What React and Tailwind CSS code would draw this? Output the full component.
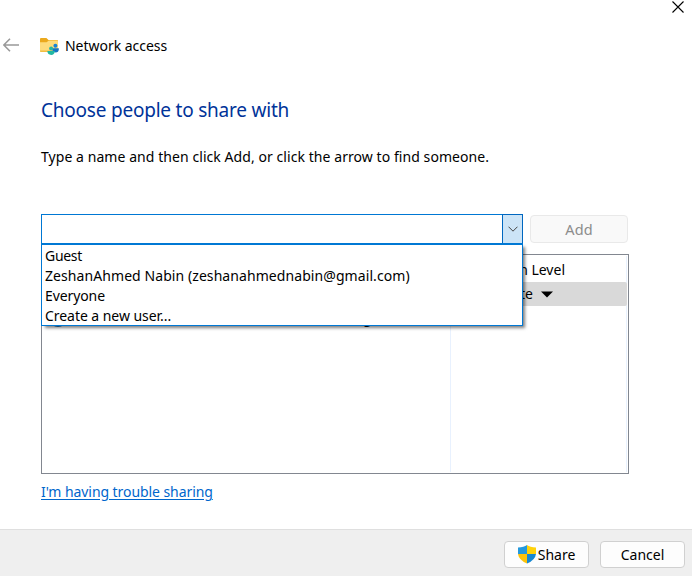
import React from "react";

const people = [
  { name: "Guest", cls: "tracking-[-0.3px]" },
  { name: "ZeshanAhmed Nabin (zeshanahmednabin@gmail.com)", cls: "tracking-[0.075px]" },
  { name: "Everyone", cls: "tracking-[-0.1px]" },
  { name: "Create a new user...", cls: "tracking-[-0.05px]" },
];

function FolderIcon() {
  return (
    <svg width="20" height="18" viewBox="0 0 20 18" className="block shrink-0">
      <path d="M0 2Q0 1 1 1H6.4L8.5 3H17Q18 3 18 4V7H0Z" fill="#eba91d" />
      <path d="M0 5.2H6.6L8.8 3.4H17Q18 3.4 18 4.4V14Q18 15 17 15H1Q0 15 0 14Z" fill="#fedc7c" />
      <path d="M0 13.4H18V14Q18 15 17 15H1Q0 15 0 14Z" fill="#f2bd42" />
      <circle cx="15.4" cy="8.7" r="2" fill="#1683d8" />
      <path d="M12.2 11.2H18.8V12.4Q18.6 15.4 15.6 15.4Q12.4 15.2 12.2 12Z" fill="#1574c4" />
      <circle cx="11.1" cy="11.5" r="2" fill="#27b5a5" />
      <path d="M7.4 14H14.8V14.8Q14.4 17.9 11.2 17.9Q7.6 17.7 7.4 14.6Z" fill="#22b8a4" />
    </svg>
  );
}

function ShieldIcon() {
  return (
    <svg width="18" height="19" viewBox="0 0 18 19" className="block shrink-0">
      <path d="M9 0Q6 2.2 0 2.4V9H9Z" fill="#2499dc" />
      <path d="M9 0Q12 2.2 18 2.4V9H9Z" fill="#ffd20a" />
      <path d="M0 9H9V18.5Q0.8 15.2 0 9Z" fill="#fbc30b" />
      <path d="M18 9H9V18.5Q17.2 15.2 18 9Z" fill="#1788d2" />
    </svg>
  );
}

export default function App() {
  return (
    <div className="flex h-[576px] w-[692px] flex-col overflow-hidden bg-white font-['Noto_Sans','Open_Sans',sans-serif] text-[14px] leading-5 text-black">
      <div className="flex h-[34px] justify-end pt-px pr-2">
        <svg width="12" height="12" viewBox="0 0 12 12" className="block">
          <path d="M0.5 0.5L11.5 11.5M11.5 0.5L0.5 11.5" stroke="#000" strokeWidth="1.1" />
        </svg>
      </div>
      <header className="flex h-6 items-center pl-[3px]">
        <svg width="16" height="14" viewBox="0 0 16 14" className="mt-[-2px] block">
          <path d="M16 7H1M7 0.8L0.8 7L7 13.2" fill="none" stroke="#999" strokeWidth="1.6" />
        </svg>
        <span className="ml-[21px]"><FolderIcon /></span>
        <span className="ml-[5px] tracking-[-0.03px]">Network access</span>
      </header>
      <main className="flex h-[471px] flex-col pl-[41px]">
        <h1 className="mt-[38px] text-[19px] leading-7 tracking-[-0.22px] text-[#003399]">Choose people to share with</h1>
        <p className="mt-[23px] whitespace-nowrap tracking-[0.065px]">Type a name and then click Add, or click the arrow to find someone.</p>
        <div className="mt-[47px] flex h-[31px] w-[588px]">
          <div className="relative flex h-[30px] w-[482px] border border-[#0078d4]">
            <div className="flex-1" />
            <button className="-my-px -mr-px flex w-[21px] items-center justify-center border border-[#0067c0] bg-[#cce4f7]">
              <svg width="10" height="6" viewBox="0 0 10 6" className="block">
                <path d="M0.5 0.7L5 5.2L9.5 0.7" fill="none" stroke="#444" strokeWidth="1" />
              </svg>
            </button>
            <ul className="absolute -left-px top-[28px] z-10 h-[83px] w-[482px] border border-t-2 border-[#0078d4] bg-white pt-px pl-[3px] shadow-[3px_3px_3px_-1px_rgba(0,0,0,0.5)]">
              {people.map((p) => (
                <li key={p.name} className={"h-5 whitespace-nowrap leading-5 " + p.cls}>{p.name}</li>
              ))}
            </ul>
          </div>
          <button className="mt-px ml-[7px] h-7 w-[98px] rounded-[4px] border border-[#e9e9e9] bg-[#f9f9f9] pb-px text-[14.5px] tracking-[0.1px] text-[#8c8c8c]">Add</button>
        </div>
        <div className="mt-[9px] flex h-[220px] w-[588px] border border-[#828790] p-px">
          <div className="flex w-[408px] shrink-0 flex-col border-r border-[#e8f1fe]">
            <div className="h-[26px]" />
            <div className="h-6 bg-[#d9d9d9]" />
            <div className="flex h-6 items-start pl-[7px]">
              <span className="mt-[5px] h-4 w-4 rounded-full bg-[#2474b5]" />
              <span className="mt-[3px] ml-[6px] whitespace-nowrap leading-[18px] tracking-[0.075px]">ZeshanAhmed Nabin (zeshanahmednabin@gmail.com)</span>
            </div>
          </div>
          <div className="flex w-[176px] flex-col border-r border-[#e8f1fe]">
            <div className="h-[26px] w-[114px] whitespace-nowrap text-right leading-[28px]">Permission Level</div>
            <div className="-mr-px flex h-6 items-center rounded-r-[2px] bg-[#d9d9d9]">
              <span className="w-[82px] text-right">Read/Write</span>
              <svg width="12" height="7" viewBox="0 0 12 7" className="ml-[8px] block">
                <path d="M0 0.5H12L6 6.5Z" fill="#000" />
              </svg>
            </div>
          </div>
        </div>
        <a className="mt-2 self-start tracking-[-0.07px] text-[#0066cc] underline underline-offset-2">I'm having trouble sharing</a>
      </main>
      <footer className="flex flex-1 justify-end gap-[11px] border-t border-[#dfdfdf] bg-[#efefef] pt-[11px] pr-[7px]">
        <button className="flex h-[27px] w-[85px] items-center justify-center gap-[2px] rounded-[4px] border border-[#d0d0d0] bg-[#fdfdfd]">
          <ShieldIcon />
          <span>Share</span>
        </button>
        <button className="h-[27px] w-[85px] rounded-[4px] border border-[#d0d0d0] bg-[#fdfdfd]">Cancel</button>
      </footer>
    </div>
  );
}
